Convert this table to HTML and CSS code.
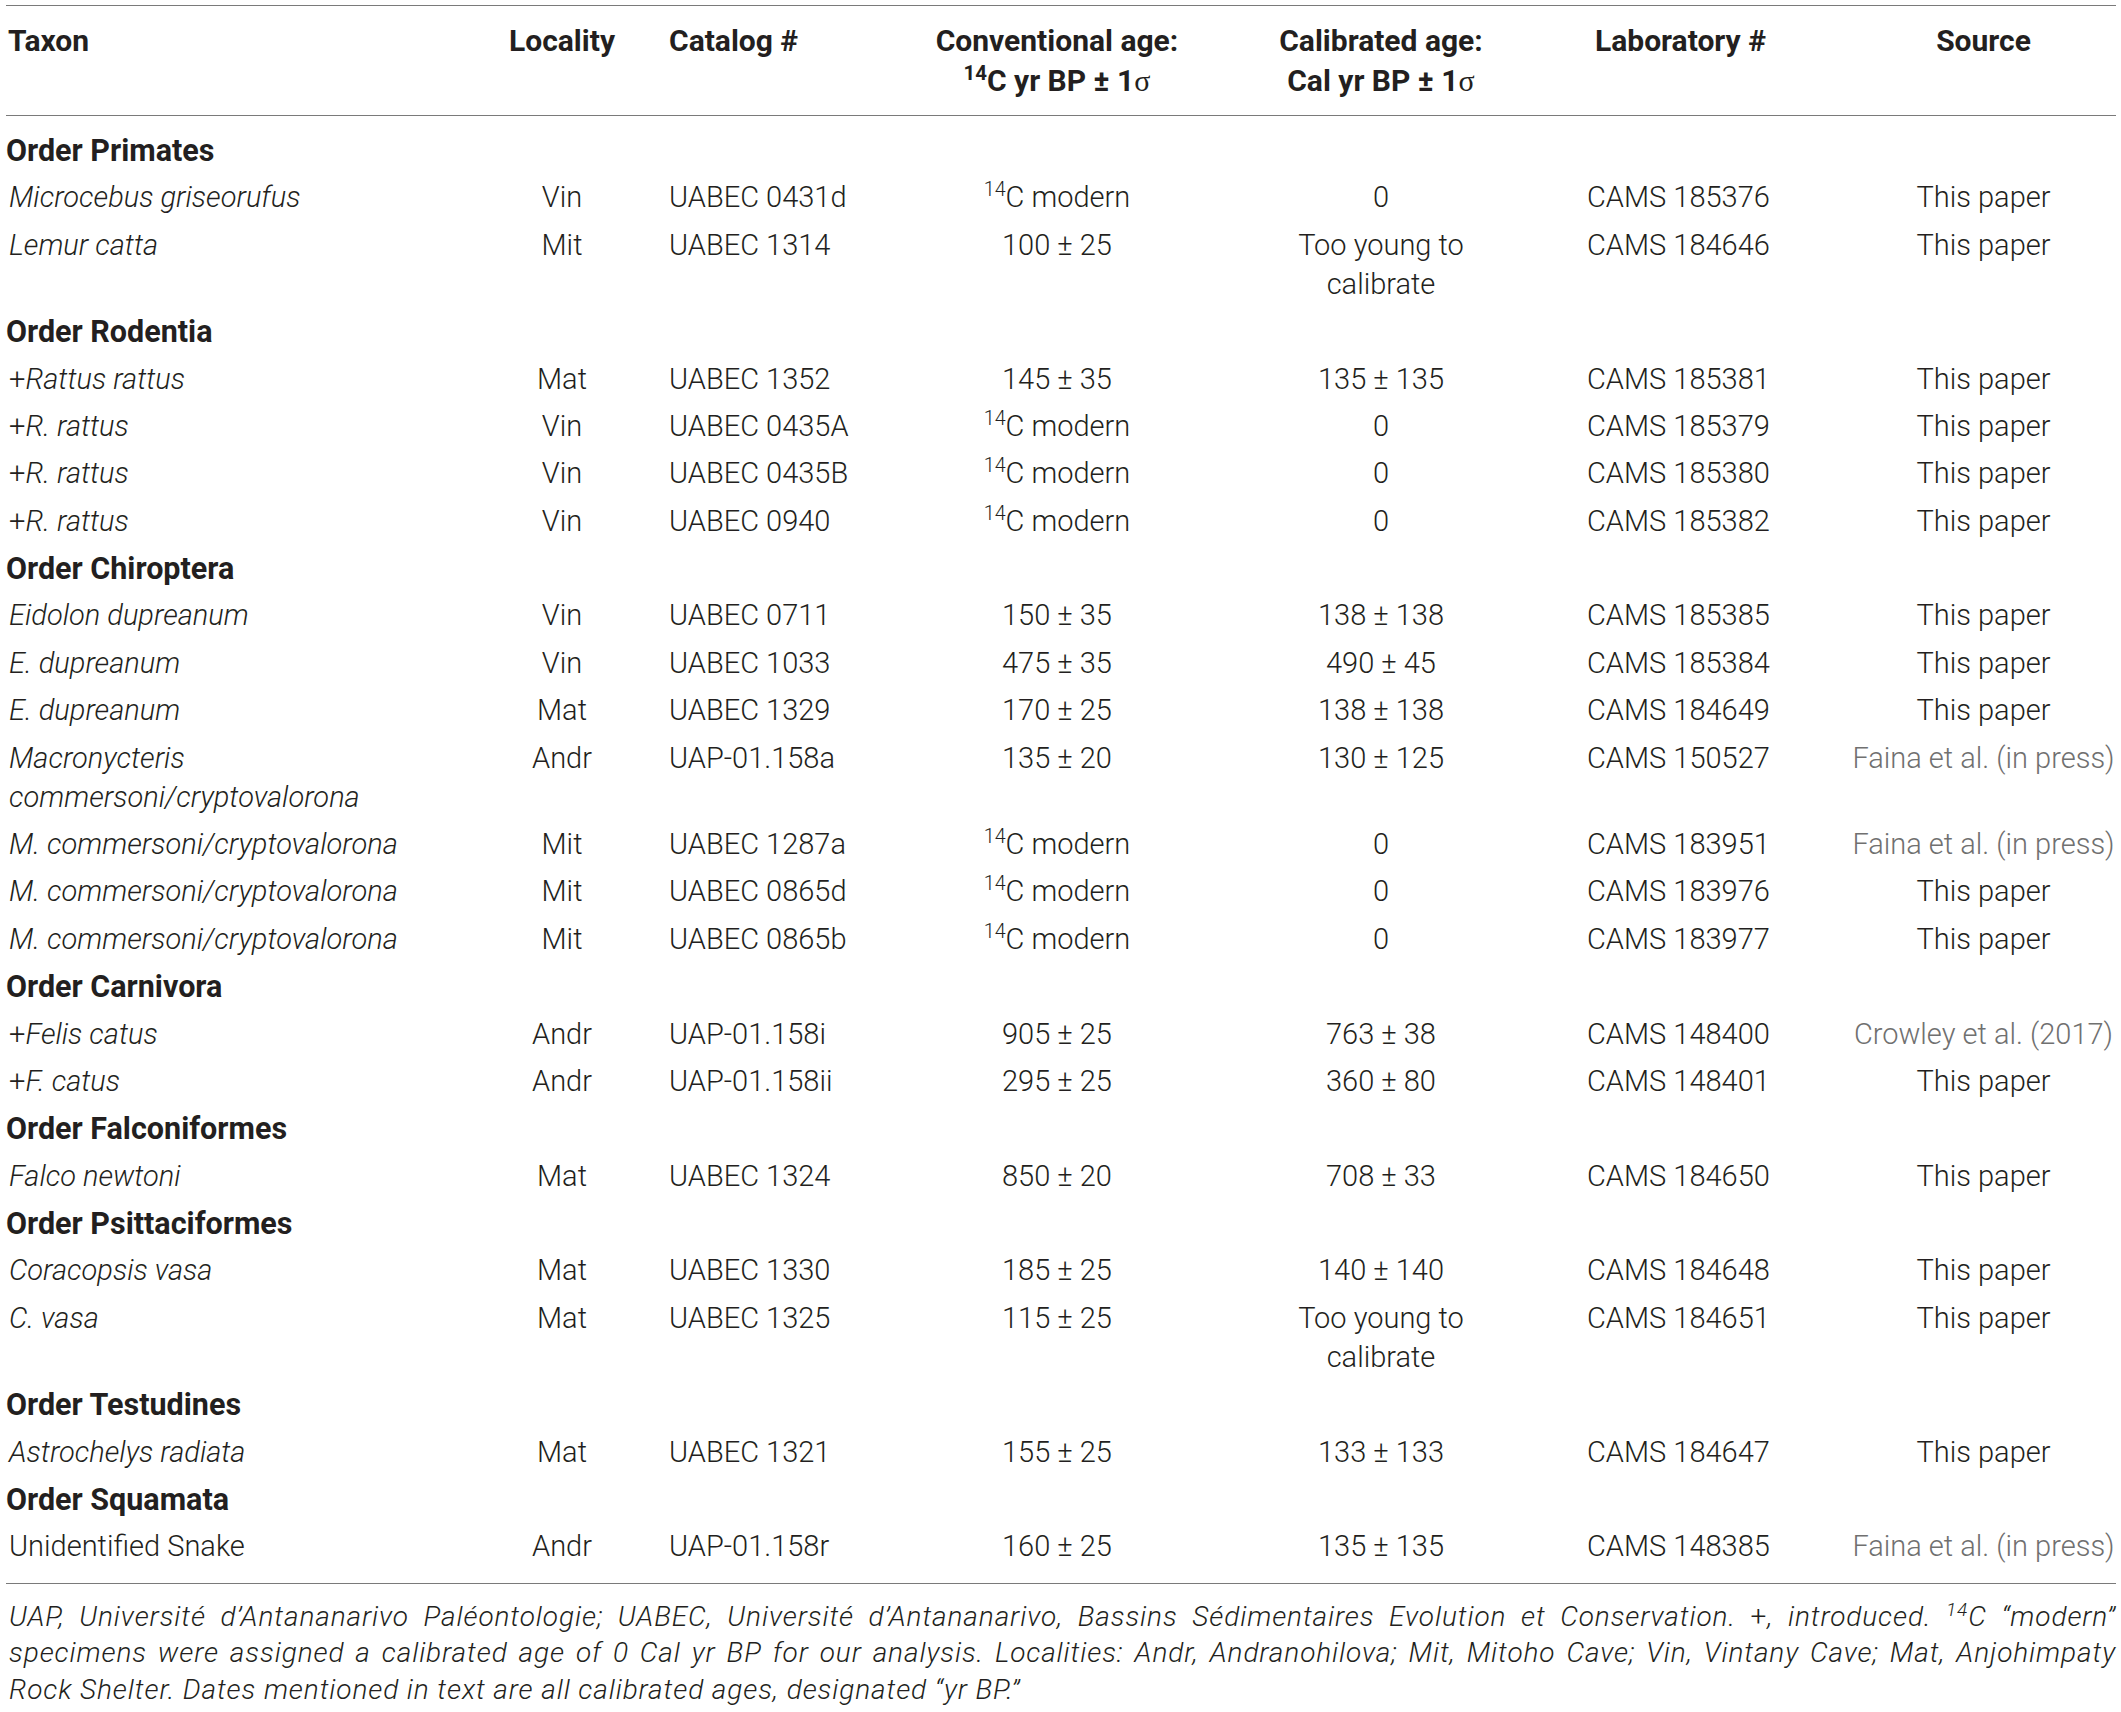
FILE: index.html
```html
<!DOCTYPE html>
<html lang="en">
<head>
<meta charset="utf-8">
<title>Radiocarbon dates</title>
<link rel="stylesheet" href="styles.css">
</head>
<body>
<div class="page">
  <table class="data">
    <colgroup>
      <col class="c-taxon"><col class="c-loc"><col class="c-cat"><col class="c-conv"><col class="c-cal"><col class="c-lab"><col class="c-src">
    </colgroup>
    <thead>
      <tr>
        <th class="l">Taxon</th>
        <th>Locality</th>
        <th class="l cat">Catalog #</th>
        <th>Conventional age:<br><sup>14</sup>C yr BP ± 1<span class="sig">σ</span></th>
        <th>Calibrated age:<br>Cal yr BP ± 1<span class="sig">σ</span></th>
        <th class="l lab">Laboratory #</th>
        <th>Source</th>
      </tr>
    </thead>
    <tbody>
      <tr class="order first"><td colspan="7">Order Primates</td></tr>
      <tr><td class="tx"><i>Microcebus griseorufus</i></td><td>Vin</td><td class="cat">UABEC 0431d</td><td><sup>14</sup>C modern</td><td>0</td><td class="lab">CAMS 185376</td><td>This paper</td></tr>
      <tr><td class="tx"><i>Lemur catta</i></td><td>Mit</td><td class="cat">UABEC 1314</td><td>100 ± 25</td><td>Too young to<br>calibrate</td><td class="lab">CAMS 184646</td><td>This paper</td></tr>
      <tr class="order"><td colspan="7">Order Rodentia</td></tr>
      <tr><td class="tx">+<i>Rattus rattus</i></td><td>Mat</td><td class="cat">UABEC 1352</td><td>145 ± 35</td><td>135 ± 135</td><td class="lab">CAMS 185381</td><td>This paper</td></tr>
      <tr><td class="tx">+<i>R. rattus</i></td><td>Vin</td><td class="cat">UABEC 0435A</td><td><sup>14</sup>C modern</td><td>0</td><td class="lab">CAMS 185379</td><td>This paper</td></tr>
      <tr><td class="tx">+<i>R. rattus</i></td><td>Vin</td><td class="cat">UABEC 0435B</td><td><sup>14</sup>C modern</td><td>0</td><td class="lab">CAMS 185380</td><td>This paper</td></tr>
      <tr><td class="tx">+<i>R. rattus</i></td><td>Vin</td><td class="cat">UABEC 0940</td><td><sup>14</sup>C modern</td><td>0</td><td class="lab">CAMS 185382</td><td>This paper</td></tr>
      <tr class="order"><td colspan="7">Order Chiroptera</td></tr>
      <tr><td class="tx"><i>Eidolon dupreanum</i></td><td>Vin</td><td class="cat">UABEC 0711</td><td>150 ± 35</td><td>138 ± 138</td><td class="lab">CAMS 185385</td><td>This paper</td></tr>
      <tr><td class="tx"><i>E. dupreanum</i></td><td>Vin</td><td class="cat">UABEC 1033</td><td>475 ± 35</td><td>490 ± 45</td><td class="lab">CAMS 185384</td><td>This paper</td></tr>
      <tr><td class="tx"><i>E. dupreanum</i></td><td>Mat</td><td class="cat">UABEC 1329</td><td>170 ± 25</td><td>138 ± 138</td><td class="lab">CAMS 184649</td><td>This paper</td></tr>
      <tr><td class="tx"><i>Macronycteris<br>commersoni/cryptovalorona</i></td><td>Andr</td><td class="cat">UAP-01.158a</td><td>135 ± 20</td><td>130 ± 125</td><td class="lab">CAMS 150527</td><td class="ref">Faina et al. (in press)</td></tr>
      <tr><td class="tx"><i>M. commersoni/cryptovalorona</i></td><td>Mit</td><td class="cat">UABEC 1287a</td><td><sup>14</sup>C modern</td><td>0</td><td class="lab">CAMS 183951</td><td class="ref">Faina et al. (in press)</td></tr>
      <tr><td class="tx"><i>M. commersoni/cryptovalorona</i></td><td>Mit</td><td class="cat">UABEC 0865d</td><td><sup>14</sup>C modern</td><td>0</td><td class="lab">CAMS 183976</td><td>This paper</td></tr>
      <tr><td class="tx"><i>M. commersoni/cryptovalorona</i></td><td>Mit</td><td class="cat">UABEC 0865b</td><td><sup>14</sup>C modern</td><td>0</td><td class="lab">CAMS 183977</td><td>This paper</td></tr>
      <tr class="order"><td colspan="7">Order Carnivora</td></tr>
      <tr><td class="tx">+<i>Felis catus</i></td><td>Andr</td><td class="cat">UAP-01.158i</td><td>905 ± 25</td><td>763 ± 38</td><td class="lab">CAMS 148400</td><td class="ref">Crowley et al. (2017)</td></tr>
      <tr><td class="tx">+<i>F. catus</i></td><td>Andr</td><td class="cat">UAP-01.158ii</td><td>295 ± 25</td><td>360 ± 80</td><td class="lab">CAMS 148401</td><td>This paper</td></tr>
      <tr class="order"><td colspan="7">Order Falconiformes</td></tr>
      <tr><td class="tx"><i>Falco newtoni</i></td><td>Mat</td><td class="cat">UABEC 1324</td><td>850 ± 20</td><td>708 ± 33</td><td class="lab">CAMS 184650</td><td>This paper</td></tr>
      <tr class="order"><td colspan="7">Order Psittaciformes</td></tr>
      <tr><td class="tx"><i>Coracopsis vasa</i></td><td>Mat</td><td class="cat">UABEC 1330</td><td>185 ± 25</td><td>140 ± 140</td><td class="lab">CAMS 184648</td><td>This paper</td></tr>
      <tr><td class="tx"><i>C. vasa</i></td><td>Mat</td><td class="cat">UABEC 1325</td><td>115 ± 25</td><td>Too young to<br>calibrate</td><td class="lab">CAMS 184651</td><td>This paper</td></tr>
      <tr class="order"><td colspan="7">Order Testudines</td></tr>
      <tr><td class="tx"><i>Astrochelys radiata</i></td><td>Mat</td><td class="cat">UABEC 1321</td><td>155 ± 25</td><td>133 ± 133</td><td class="lab">CAMS 184647</td><td>This paper</td></tr>
      <tr class="order"><td colspan="7">Order Squamata</td></tr>
      <tr class="last"><td class="tx">Unidentified Snake</td><td>Andr</td><td class="cat">UAP-01.158r</td><td>160 ± 25</td><td>135 ± 135</td><td class="lab">CAMS 148385</td><td class="ref">Faina et al. (in press)</td></tr>
    </tbody>
  </table>
  <div class="note">
    <p class="jl">UAP, Université d’Antananarivo Paléontologie; UABEC, Université d’Antananarivo, Bassins Sédimentaires Evolution et Conservation. <span class="up">+</span>, introduced. <sup>14</sup>C “modern”</p>
    <p class="jl">specimens were assigned a calibrated age of 0 Cal yr BP for our analysis. Localities: Andr, Andranohilova; Mit, Mitoho Cave; Vin, Vintany Cave; Mat, Anjohimpaty</p>
    <p>Rock Shelter. Dates mentioned in text are all calibrated ages, designated “yr BP.”</p>
  </div>
</div>
</body>
</html>
```

FILE: styles.css
```css
html, body {
  margin: 0;
  padding: 0;
  background: #ffffff;
}

.page {
  padding: 5px 5px 0 6px;
  color: #231f20;
  font-family: Roboto, "Liberation Sans", Arial, sans-serif;
  font-weight: 300;
}

.data {
  width: 2110px;
  border-collapse: collapse;
  table-layout: fixed;
  font-size: 29px;
}

.c-taxon { width: 475px; }
.c-loc { width: 162px; }
.c-cat { width: 238px; }
.c-conv { width: 352px; }
.c-cal { width: 296px; }
.c-lab { width: 322px; }
.c-src { width: 265px; }

.data thead tr {
  border-top: 1px solid #7a7a7a;
  border-bottom: 1px solid #7a7a7a;
}

.data th {
  font-size: 30px;
  font-weight: 700;
  line-height: 40px;
  padding: 15px 0 14px;
  text-align: center;
  vertical-align: top;
  white-space: nowrap;
}

.data th.l { text-align: left; padding-left: 2px; }
.data th.cat { padding-left: 26px; }
.data th.lab { padding-left: 66px; }

.sig {
  font-family: "Liberation Serif", "Times New Roman", serif;
  font-weight: 400;
}

.data td {
  line-height: 39.2px;
  padding: 4.08px 0;
  text-align: center;
  vertical-align: top;
  white-space: nowrap;
}

.data td.tx { text-align: left; padding-left: 3px; }
.data td.cat { text-align: left; padding-left: 26px; }
.data td.lab { text-align: left; padding-left: 58px; }
.data td.ref { color: #707070; }

.data tr.order td {
  text-align: left;
  font-size: 30.5px;
  font-weight: 700;
  padding-left: 0;
}

.data tr.first td { padding-top: 15px; }
.data tr.last td { padding-bottom: 16px; }

.data tbody { border-bottom: 1px solid #7a7a7a; }

sup {
  font-size: 0.68em;
  line-height: 0;
  vertical-align: 0.55em;
}

.note {
  margin-top: 15px;
  font-size: 28px;
  letter-spacing: 0.9px;
  font-style: italic;
  line-height: 36.5px;
}

.note p {
  margin: 0;
  padding-left: 3px;
}

.note p.jl {
  text-align: justify;
  text-align-last: justify;
}

.note .up { font-style: normal; }
```
